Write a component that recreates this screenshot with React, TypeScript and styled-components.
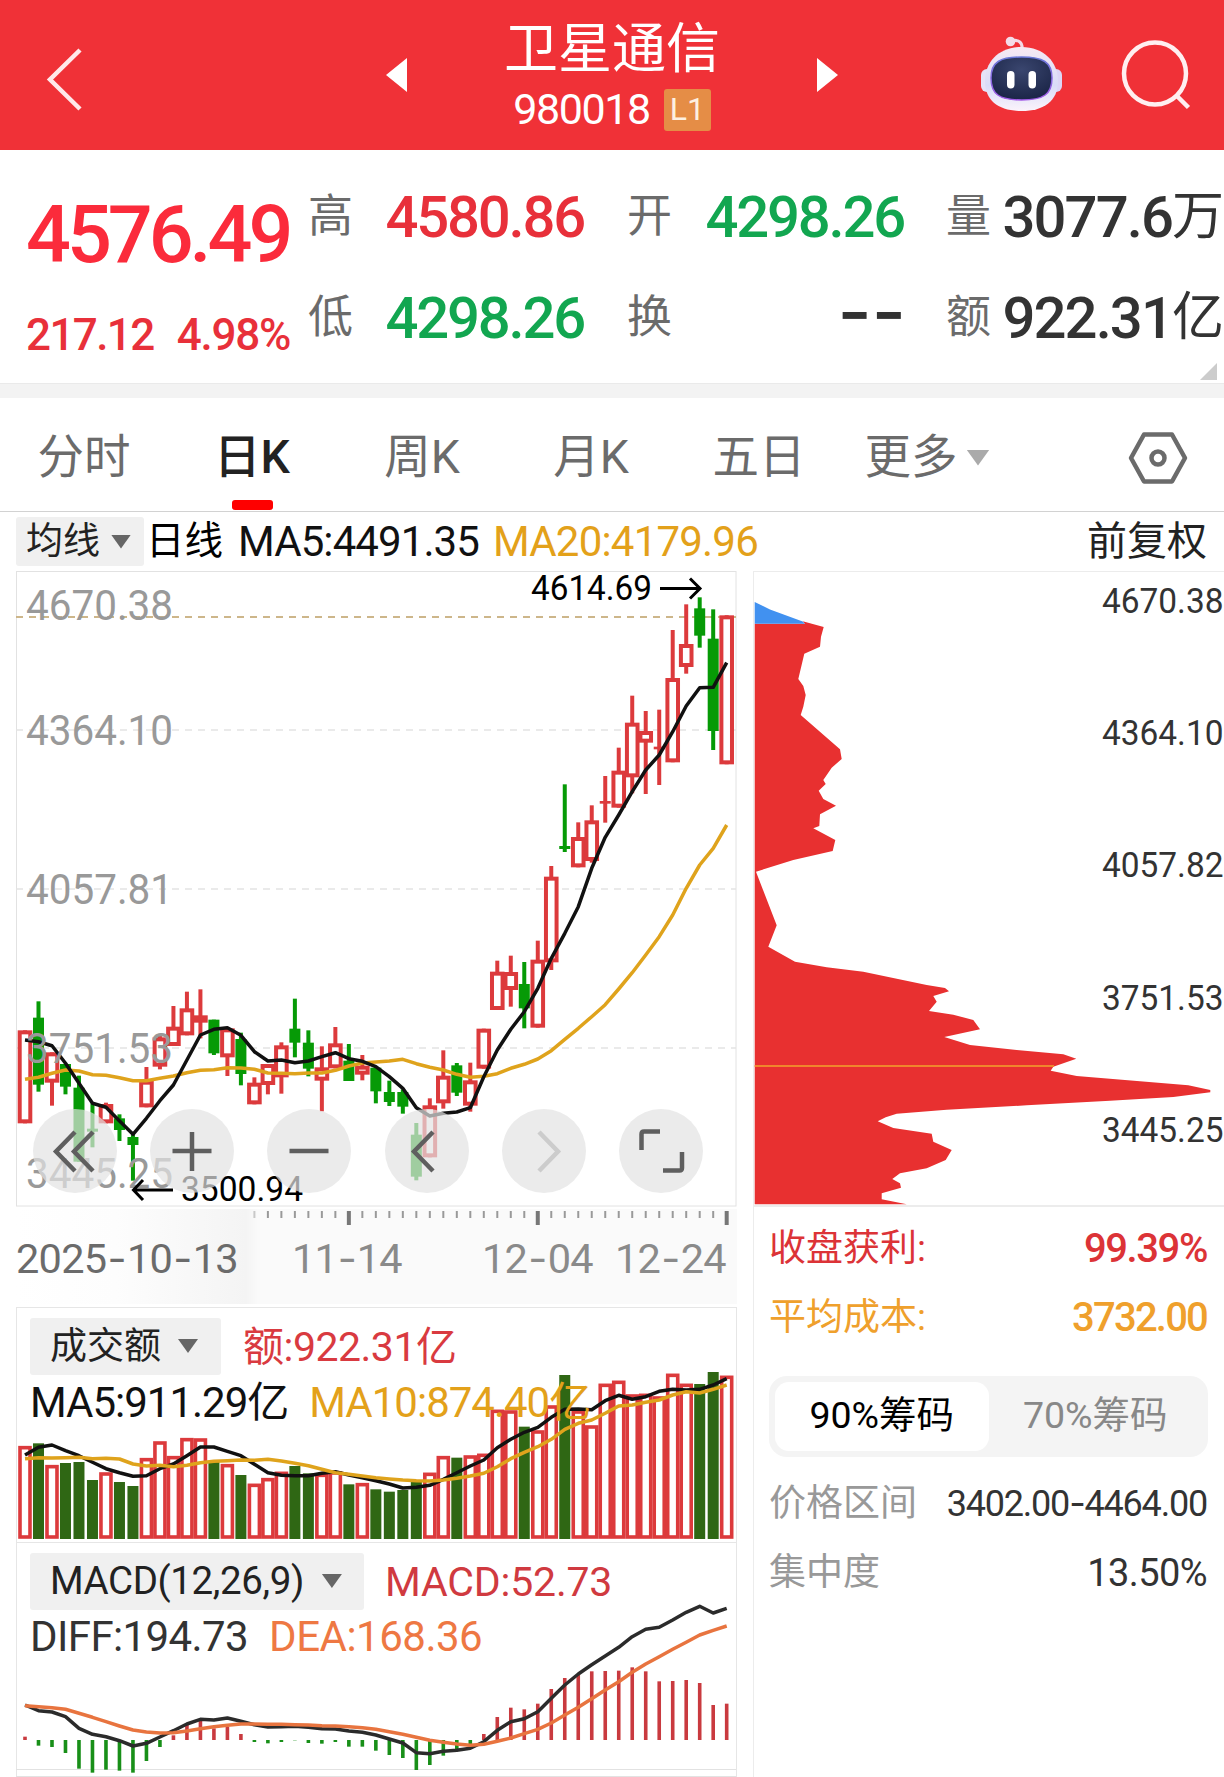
import React from 'react';
import styled, { createGlobalStyle } from 'styled-components';

const RED = '#e8303a';
const GREEN = '#12a650';
const INK = '#333333';
const GREY = '#6b6b6b';
const GOLD = '#e3a11a';

const Global = createGlobalStyle`
  * { box-sizing: border-box; }
  body {
    margin: 0;
    background: #fff;
    font-family: Roboto, "Noto Sans CJK SC", sans-serif;
    color: ${INK};
  }
  svg { display: block; }
`;

const Page = styled.main`
  width: 1224px;
  height: 1777px;
  overflow: hidden;
  display: flex;
  flex-direction: column;
  background: #fff;
`;

const Txt = styled.span<{ $s: number; $ls?: number; $c?: string; $w?: number; $ml?: number; $pt?: number }>`
  font-size: ${(p) => p.$s}px;
  letter-spacing: ${(p) => p.$ls ?? 0}px;
  color: ${(p) => p.$c ?? INK};
  font-weight: ${(p) => p.$w ?? 400};
  margin-left: ${(p) => p.$ml ?? 0}px;
  padding-top: ${(p) => p.$pt ?? 0}px;
  line-height: 1;
  white-space: nowrap;
`;

const Dash = styled.span`
  font-family: Inter, sans-serif;
`;

const Blank = styled.span`
  margin: 0 -2px 13px 0;
  font-family: Inter, sans-serif;
  font-size: 74px;
  font-weight: 500;
  line-height: 1;
  color: ${INK};
`;

/* Digits come from Roboto, hyphens from Inter, whose dash is as wide as a digit. */
const withDashes = (text: string) =>
  text.split(/(-)/).map((part, i) => (part === '-' ? <Dash key={i}>-</Dash> : part));

/* ---------- header ---------- */

const Header = styled.header`
  height: 150px;
  flex: none;
  display: grid;
  grid-template-columns: 386px 452px 386px;
  align-items: center;
  background: #f03137;
`;

const HeaderLeft = styled.div`
  padding: 9px 0 0 44px;
`;

const Switcher = styled.div`
  display: flex;
  align-items: center;
  justify-content: space-between;
`;

const Titles = styled.div`
  display: flex;
  flex-direction: column;
  align-items: center;
  padding-top: 4px;
`;

const CodeLine = styled.div`
  display: flex;
  align-items: center;
  gap: 14px;
  margin-top: 11px;
`;

const Badge = styled.span`
  width: 47px;
  height: 42px;
  border-radius: 3px;
  background: #e58d46;
  color: #fdf0e2;
  font-size: 32px;
  line-height: 41px;
  text-align: center;
`;

const HeaderRight = styled.div`
  display: flex;
  align-items: center;
  padding: 0 0 3px 141px;
  gap: 57px;
`;

const SearchButton = styled.div`
  padding-top: 3px;
`;

const Robot = () => (
  <svg width="84" height="80" viewBox="979 33 84 80">
    <defs>
      <linearGradient id="shell" x1="0" y1="0" x2="0" y2="1">
        <stop offset="0" stopColor="#f6e9f3" />
        <stop offset="0.6" stopColor="#d9dcf8" />
        <stop offset="1" stopColor="#fbf3fb" />
      </linearGradient>
      <linearGradient id="rim" x1="0" y1="0" x2="0" y2="1">
        <stop offset="0" stopColor="#6a78d8" />
        <stop offset="1" stopColor="#a35ae6" />
      </linearGradient>
      <radialGradient id="face" cx="0.5" cy="0.3" r="0.7">
        <stop offset="0" stopColor="#3a466f" />
        <stop offset="1" stopColor="#1b2547" />
      </radialGradient>
    </defs>
    <path d="M1011 40 C1018 38 1023 41 1022 49" fill="none" stroke="#f3d9e6" strokeWidth="3" />
    <circle cx="1010.5" cy="40.5" r="4.8" fill="#f4dbe8" />
    <rect x="981" y="68" width="14" height="23" rx="6" fill="#e6e3f8" />
    <rect x="1048" y="68" width="14" height="23" rx="6" fill="#dcd6f6" />
    <path d="M1021.500 46 C1044 46 1058 61 1058 80 C1058 100 1044 110 1021.500 110 C999 110 985 100 985 80 C985 61 999 46 1021.500 46 Z" fill="url(#shell)" />
    <path d="M1021.500 56 C1043 56 1052 61 1052 77 C1052 93 1044 99 1021.500 99 C999 99 991 93 991 77 C991 61 1000 56 1021.500 56 Z" fill="url(#face)" stroke="url(#rim)" strokeWidth="1.500" />
    <rect x="1007" y="70" width="7.500" height="17.500" rx="3.700" fill="#fff" />
    <rect x="1028.500" y="70" width="7.500" height="17.500" rx="3.700" fill="#fff" />
  </svg>
);

/* ---------- quote ---------- */

const Quote = styled.section`
  position: relative;
  height: 233px;
  flex: none;
  display: grid;
  grid-template-columns: 278px repeat(3, 278px);
  column-gap: 42px;
  margin-left: -14px;
  width: 1238px;
`;

const PriceBlock = styled.div`
  padding: 46px 0 0 40px;
  width: 320px;
`;

const Change = styled.div`
  display: flex;
  gap: 23px;
  margin-top: 38px;
`;

const QuoteCol = styled.div`
  display: flex;
  flex-direction: column;
  padding-top: 16px;
`;

const Cell = styled.div`
  height: 101px;
  display: flex;
  align-items: center;
  justify-content: space-between;
`;

const Amount = styled.span`
  display: flex;
  align-items: center;
`;

const Corner = styled.i`
  position: absolute;
  right: 7px;
  bottom: 3px;
  width: 17px;
  height: 17px;
  background: #ccc;
  clip-path: polygon(100% 0, 100% 100%, 0 100%);
`;

const Band = styled.div`
  height: 15px;
  flex: none;
  background: #f3f3f3;
  border-top: 1px solid #eaeaea;
`;

/* ---------- tabs ---------- */

const Tabs = styled.nav`
  height: 114px;
  flex: none;
  display: grid;
  grid-template-columns: 168px 168px 172px 166px 170px 166px 1fr;
  border-bottom: 1px solid #d2d2d2;
`;

const Tab = styled.div<{ $on?: boolean }>`
  position: relative;
  display: flex;
  align-items: center;
  justify-content: center;
  gap: 9px;
  padding-top: 6px;
  font-size: 46.5px;
  line-height: 1;
  color: ${(p) => (p.$on ? '#222' : GREY)};
  font-weight: ${(p) => (p.$on ? 500 : 400)};
  &::after {
    content: '';
    display: ${(p) => (p.$on ? 'block' : 'none')};
    position: absolute;
    bottom: 1px;
    left: 64px;
    width: 41px;
    height: 10px;
    border-radius: 3px;
    background: #fe0000;
  }
`;

const Settings = styled.div`
  display: flex;
  align-items: center;
  justify-content: flex-end;
  padding: 6px 36px 0 0;
`;

const Caret = styled.i<{ $w?: number; $h?: number; $c?: string }>`
  width: ${(p) => p.$w ?? 20}px;
  height: ${(p) => p.$h ?? 14}px;
  background: ${(p) => p.$c ?? '#666'};
  clip-path: polygon(0 0, 100% 0, 50% 100%);
`;

/* ---------- indicator line ---------- */

const MaLine = styled.div`
  height: 59px;
  flex: none;
  display: flex;
  align-items: center;
  padding: 0 17px 0 16px;
`;

const Picker = styled.button<{ $w: number; $h: number; $pl: number; $gap: number }>`
  width: ${(p) => p.$w}px;
  height: ${(p) => p.$h}px;
  padding: 0 0 0 ${(p) => p.$pl}px;
  display: flex;
  align-items: center;
  gap: ${(p) => p.$gap}px;
  border: 0;
  border-radius: 3px;
  background: #f0f0f0;
  font-family: inherit;
`;

const Right = styled.span`
  margin-left: auto;
  display: flex;
`;

/* ---------- body ---------- */

const Body = styled.div`
  flex: 1;
  min-height: 0;
  display: grid;
  grid-template-columns: 721px 471px;
  column-gap: 16px;
  padding-left: 16px;
`;

const Charts = styled.div`
  display: flex;
  flex-direction: column;
`;

const KPanel = styled.div`
  position: relative;
  height: 636px;
  flex: none;
`;

const Tools = styled.div`
  position: absolute;
  left: 17px;
  top: 538px;
  display: flex;
  gap: 33.2px;
`;

const Tool = styled.button<{ $off?: boolean }>`
  width: 84px;
  height: 84px;
  padding: 0;
  border: 0;
  border-radius: 50%;
  background: rgba(227, 227, 227, 0.7);
  stroke: ${(p) => (p.$off ? '#cccccc' : '#5f5f5f')};
  stroke-width: 4.5;
  fill: none;
`;

const Dates = styled.div`
  height: 100px;
  flex: none;
  padding-top: 2px;
`;

const DateStrip = styled.div`
  height: 95px;
  background: linear-gradient(90deg, #fff 0, #fdfdfd 100px, #f4f4f4 230px, #fafafa 242px, #fafafa 100%);
`;

const DateRow = styled.div`
  display: flex;
  align-items: center;
  height: 59px;
`;

const DateText = styled.span<{ $w: number; $ml?: number; $c?: string }>`
  width: ${(p) => p.$w}px;
  margin-left: ${(p) => p.$ml ?? 0}px;
  display: flex;
  justify-content: space-between;
  font-size: 41.5px;
  letter-spacing: -0.7px;
  line-height: 1;
  white-space: nowrap;
  color: ${(p) => p.$c ?? '#8a8a8a'};
`;

const SubPanel = styled.div<{ $h: number }>`
  position: relative;
  height: ${(p) => p.$h}px;
  flex: none;
  border: 1px solid #e6e6e6;
  border-bottom: 0;
`;

const Plot = styled.div`
  position: absolute;
  left: -1px;
  top: -1px;
`;

const Legend = styled.div`
  position: relative;
  padding: 9px 0 0 13px;
`;

const LegendRow = styled.div<{ $h: number }>`
  display: flex;
  align-items: center;
  height: ${(p) => p.$h}px;
`;

/* ---------- chips ---------- */

const Chips = styled.aside`
  border-left: 1px solid #ececec;
  border-top: 1px solid #ececec;
  display: flex;
  flex-direction: column;
`;

const ChipPlot = styled.div`
  height: 635px;
  flex: none;
  border-bottom: 2px solid #ececec;
`;

const Stats = styled.div`
  padding: 7px 17px 0 15px;
  display: flex;
  flex-direction: column;
`;

const StatRow = styled.div`
  height: 69px;
  display: flex;
  align-items: center;
  justify-content: space-between;
`;

const Segment = styled.div`
  height: 81px;
  margin: 24px -1px 12px 0;
  padding: 6px;
  display: grid;
  grid-template-columns: 1fr 1fr;
  border-radius: 18px;
  background: #f4f4f4;
`;

const SegmentItem = styled.div<{ $on?: boolean }>`
  display: flex;
  align-items: center;
  justify-content: center;
  padding-bottom: 2px;
  border-radius: 14px;
  font-size: 37.5px;
  line-height: 1;
  color: ${(p) => (p.$on ? '#000' : '#888')};
  background: ${(p) => (p.$on ? '#fff' : 'transparent')};
`;

/* ---------- data ---------- */

const STEP = 13.494;
const X = (i: number) => 25 + STEP * i;

// [up, body top, body bottom, wick top, wick bottom], in thirds of a pixel
type Candle = [number, number, number, number, number];
const candles: Candle[] = [
  [1, 211, 490, 211, 490], [0, 173, 374, 124, 395], [1, 277, 368, 277, 437], [0, 312, 380, 312, 403],
  [0, 383, 605, 347, 605], [0, 506, 515, 430, 562], [1, 432, 490, 428, 490], [0, 475, 510, 463, 543],
  [0, 531, 555, 525, 662], [1, 362, 442, 321, 442], [1, 232, 320, 226, 328], [1, 200, 258, 138, 258],
  [1, 145, 226, 95, 226], [1, 166, 188, 88, 235], [0, 179, 280, 179, 285], [1, 205, 292, 205, 348],
  [0, 237, 342, 218, 376], [1, 368, 433, 352, 433], [1, 312, 375, 312, 403], [1, 256, 352, 247, 401],
  [0, 206, 248, 116, 292], [0, 248, 326, 211, 349], [1, 322, 362, 259, 454], [1, 250, 325, 201, 325],
  [0, 302, 363, 252, 363], [1, 317, 344, 285, 361], [0, 323, 394, 323, 430], [0, 396, 426, 362, 438],
  [0, 396, 440, 388, 461], [0, 524, 650, 489, 661], [1, 436, 592, 415, 592], [1, 347, 430, 271, 446],
  [0, 316, 398, 309, 408], [1, 361, 437, 308, 455], [1, 206, 326, 206, 326], [1, 35, 150, 2, 150],
  [1, 36, 90, -13, 140], [0, 72, 145, 6, 205], [1, -1, 203, -58, 203], [1, -250, 7, -282, 30],
  [0, -342, -333, -527, -324], [1, -369, -278, -413, -278], [1, -419, -297, -464, -292], [1, -477, -469, -552, -412],
  [1, -568, -457, -637, -457], [1, -712, -548, -793, -500], [1, -687, -652, -747, -498], [1, -640, -632, -751, -525],
  [1, -846, -593, -990, -593], [1, -948, -879, -1067, -859], [0, -1055, -973, -1088, -937], [0, -964, -687, -1052, -630],
  [1, -1034, -587, -1034, -587],
];

const ma5 = [240, 245, 257, 310, 370, 430, 442, 483, 523, 475, 422, 375, 300, 225, 208, 203, 226, 275, 303, 300, 308, 303, 290, 278, 296, 304, 320, 350, 385, 443, 468, 460, 456, 443, 350, 270, 208, 155, 85, -5, -80, -160, -275, -368, -435, -505, -570, -615, -685, -762, -817, -818, -892];
const ma20 = [358, 352, 340, 330, 333, 344, 346, 353, 362, 362, 355, 348, 338, 331, 329, 323, 324, 328, 339, 340, 341, 339, 339, 331, 318, 309, 306, 303, 298, 311, 322, 330, 343, 352, 349, 341, 325, 313, 297, 272, 238, 205, 170, 134, 87, 38, -15, -70, -135, -215, -285, -335, -405];

const volume = [767, 760, 824, 819, 816, 870, 846, 876, 888, 803, 753, 797, 743, 744, 815, 821, 855, 880, 863, 844, 828, 850, 850, 843, 883, 878, 898, 905, 900, 875, 847, 797, 803, 795, 790, 658, 660, 710, 720, 645, 555, 660, 705, 580, 571, 612, 610, 618, 550, 580, 582, 546, 556];
const vma5 = [795, 772, 765, 782, 797, 817, 836, 848, 859, 857, 836, 822, 797, 771, 771, 784, 797, 823, 848, 856, 857, 857, 850, 845, 855, 863, 872, 882, 894, 892, 886, 868, 848, 828, 810, 773, 748, 727, 712, 682, 658, 657, 659, 632, 616, 628, 620, 604, 598, 600, 598, 585, 566];
const vma10 = [806, 803, 804, 803, 802, 806, 805, 807, 822, 828, 826, 830, 826, 818, 814, 812, 810, 811, 808, 813, 820, 827, 838, 848, 853, 858, 863, 867, 870, 872, 873, 870, 865, 858, 850, 830, 806, 787, 770, 748, 718, 700, 690, 670, 648, 645, 637, 630, 615, 605, 609, 598, 585];

const macd = [590, 617, 621, 639, 686, 698, 689, 692, 698, 663, 621, 586, 555, 542, 565, 560, 582, 606, 610, 606, 601, 609, 611, 606, 620, 620, 632, 645, 654, 690, 675, 647, 630, 612, 582, 531, 503, 508, 491, 447, 414, 405, 394, 393, 392, 382, 394, 424, 423, 420, 429, 495, 491];
const diff = [495, 512, 516, 530, 565, 583, 590, 602, 618, 610, 591, 572, 552, 538, 540, 534, 544, 554, 561, 560, 559, 562, 566, 567, 573, 577, 585, 597, 609, 638, 641, 634, 631, 625, 605, 571, 545, 536, 515, 475, 435, 402, 374, 348, 322, 290, 268, 262, 240, 217, 199, 219, 205];
const dea = [497, 500, 503, 508, 520, 532, 545, 558, 570, 576, 579, 578, 573, 566, 560, 556, 552, 552, 553, 553, 554, 555, 557, 558, 560, 563, 568, 575, 583, 592, 601, 607, 612, 616, 613, 604, 594, 581, 568, 549, 525, 502, 476, 450, 425, 397, 372, 350, 328, 307, 285, 271, 258];

const chipEdge: [number, number][] = [
  [44, 701], [195, 701], [188, 694], [251, 711], [243, 740], [240, 770], [193, 791], [175, 867], [190, 888], [197, 915], [190, 950], [182, 975],
  [300, 1078], [305, 1107], [275, 1133], [250, 1170], [257, 1182], [236, 1202], [250, 1227], [288, 1247], [240, 1273], [238, 1308],
  [220, 1315], [286, 1350], [278, 1383], [160, 1410], [48, 1445], [110, 1606], [85, 1670], [165, 1715], [260, 1732], [370, 1745],
  [560, 1785], [615, 1794], [627, 1804], [580, 1818], [590, 1835], [567, 1863], [640, 1874], [700, 1890], [720, 1918], [613, 1941],
  [690, 1965], [830, 1980], [970, 1993], [1009, 2006], [940, 2030], [932, 2042], [1010, 2058], [1200, 2074], [1345, 2086], [1411, 2100],
  [1411, 2107], [1300, 2121], [1110, 2132], [860, 2146], [620, 2159], [470, 2171], [437, 2182], [413, 2194], [460, 2214], [575, 2231],
  [580, 2255], [635, 2280], [617, 2310], [560, 2335], [480, 2350], [457, 2367], [480, 2380], [483, 2393], [425, 2410], [425, 2428],
  [500, 2443], [44, 2443],
];

const line = (values: number[], top: number) =>
  values.map((v, i) => `${X(i).toFixed(1)},${(top + v / 3).toFixed(1)}`).join(' ');

const Line = ({ values, top, color, w = 3.5 }: { values: number[]; top: number; color: string; w?: number }) => (
  <polyline points={line(values, top)} fill="none" stroke={color} strokeWidth={w} strokeLinejoin="round" />
);

const AxisText = styled.text`
  font-family: Roboto, sans-serif;
  font-size: 42px;
  fill: #999;
`;

const MarkText = styled.text`
  font-family: Roboto, sans-serif;
  font-size: 35px;
  fill: #000;
`;

const KChart = () => (
  <svg width="721" height="636" viewBox="16 571 721 636">
    <rect x="16.500" y="571.500" width="719.500" height="634.500" fill="none" stroke="#e2e2e2" />
    {[730, 889, 1048].map((y) => (
      <line key={y} x1="16" x2="736" y1={y} y2={y} stroke="#e4e4e4" strokeWidth="1.500" strokeDasharray="7 6" />
    ))}
    <line x1="16" x2="736" y1="617" y2="617" stroke="#cdb68a" strokeWidth="2" strokeDasharray="7 6" />
    {candles.map(([up, t, b, h, l], i) => {
      const y = (v: number) => 960 + v / 3;
      const x = X(i);
      const small = b - t < 12;
      if (up && !small) {
        return (
          <g key={i} stroke="#dc3a3c" strokeWidth="4" fill="#fff">
            <path d={`M${x} ${y(h)}V${y(l)}`} />
            <rect x={x - 5.3} y={y(t) + 2} width="10.600" height={Math.max(y(b) - y(t) - 4, 1)} />
          </g>
        );
      }
      const c = up ? '#dc3a3c' : '#069a06';
      return (
        <g key={i} fill={c}>
          <rect x={x - 2} y={y(h)} width="4" height={y(l) - y(h)} />
          <rect x={x - 5.5} y={y(t)} width="11" height={y(b) - y(t)} />
        </g>
      );
    })}
    <Line values={ma20} top={960} color="#dfa31c" />
    <Line values={ma5} top={960} color="#111" />
    {([['4670.38', 620], ['4364.10', 745], ['4057.81', 904], ['3751.53', 1063], ['3445.25', 1188]] as [string, number][]).map(([t, y]) => (
      <AxisText key={t} x="26" y={y} textLength="147" lengthAdjust="spacingAndGlyphs">{t}</AxisText>
    ))}
    <MarkText x="531" y="600" textLength="121" lengthAdjust="spacingAndGlyphs">4614.69</MarkText>
    <MarkText x="181" y="1201" textLength="122" lengthAdjust="spacingAndGlyphs">3500.94</MarkText>
    <g fill="none" stroke="#000" strokeWidth="3">
      <path d="M660 588.500H700M690 578.500L700 588.500L690 598.500" />
      <path d="M173 1190H134M143 1180L133.500 1190L143 1200" />
    </g>
  </svg>
);

const tools: { d: string; off?: boolean }[] = [
  { d: 'M42 23L23 42.500L42 62M60 23L41 42.500L60 62' },
  { d: 'M42 23V62M22.500 42H61.500' },
  { d: 'M22.500 42H61.500' },
  { d: 'M48 23L29 42.500L48 62' },
  { d: 'M37 23L56 42.500L37 62', off: true },
  { d: 'M41 22.500H25Q22.500 22.500 22.500 25V41M63 43V59Q63 61.500 60.500 61.500H44' },
];

const Ticks = () => (
  <svg width="721" height="20" viewBox="16 1208 721 20">
    {candles.slice(17).map((_, k) => {
      const i = k + 17;
      const major = i === 24 || i === 38 || i === 52;
      return (
        <line key={i} x1={X(i)} x2={X(i)} y1="1210" y2={major ? 1224 : 1217} stroke={major ? '#777' : '#999'} strokeWidth={major ? 4 : 2} opacity={i === 17 ? 0.5 : 1} />
      );
    })}
  </svg>
);

const Volume = () => (
  <svg width="721" height="235" viewBox="16 1307 721 235">
    {volume.map((v, i) => {
      const y = 1190 + v / 3;
      return candles[i][0] ? (
        <rect key={i} x={X(i) - 5} y={y + 2} width="10" height={1538 - y - 3} fill="#fff" stroke="#dc3a3c" strokeWidth="3.600" />
      ) : (
        <rect key={i} x={X(i) - 5.5} y={y} width="11" height={1539 - y} fill="#2f6714" />
      );
    })}
    <Line values={vma5} top={1190} color="#111" />
    <Line values={vma10} top={1190} color="#dfa31c" />
  </svg>
);

const Macd = () => (
  <svg width="721" height="235" viewBox="16 1542 721 235">
    <path d="M16 1769.500H736M16 1776.500H736" stroke="#e2e2e2" />
    {macd.map((v, i) => {
      const y = 1540 + v / 3;
      const up = v < 600;
      return <rect key={i} x={X(i) - 1.8} y={Math.min(y, 1740)} width="3.600" height={Math.abs(y - 1740)} fill={up ? '#c93a3f' : '#188f18'} />;
    })}
    <Line values={diff} top={1540} color="#2b2b2b" />
    <Line values={dea} top={1540} color="#e8743f" />
  </svg>
);

const ChipText = styled.text`
  font-family: Roboto, sans-serif;
  font-size: 35px;
  fill: #333;
`;

const ChipChart = () => (
  <svg width="470" height="633" viewBox="754 572 470 633">
    <polygon points={chipEdge.map(([x, y]) => `${(740 + x / 3).toFixed(1)},${(390 + y / 3).toFixed(1)}`).join(' ')} fill="#e83030" />
    <polygon points="754.700,602 770,609.500 802.700,621.500 805,623.700 754.700,623.700" fill="#4191f0" />
    <line x1="754.700" x2="1054" y1="1066" y2="1066" stroke="#f0862c" strokeWidth="2" />
    {['4670.38', '4364.10', '4057.82', '3751.53', '3445.25'].map((t, i) => (
      <ChipText key={t} x="1102" y={612.7 + i * 132.3} textLength="121.500" lengthAdjust="spacingAndGlyphs">{t}</ChipText>
    ))}
  </svg>
);

export default function App() {
  return (
    <Page>
      <Global />
      <Header>
        <HeaderLeft>
          <svg width="40" height="64" viewBox="44 47 40 64">
            <path d="M80 49L50 78.500L80 108" fill="none" stroke="#ffe9ea" strokeWidth="4.500" />
          </svg>
        </HeaderLeft>
        <Switcher>
          <svg width="21" height="34" viewBox="0 0 21 34"><path d="M21 0V34L0 17Z" fill="#fff" /></svg>
          <Titles>
            <Txt $s={54} $c="#fff">卫星通信</Txt>
            <CodeLine>
              <Txt $s={43} $ls={-1.4} $c="#fff">980018</Txt>
              <Badge>L1</Badge>
            </CodeLine>
          </Titles>
          <svg width="21" height="34" viewBox="0 0 21 34"><path d="M0 0V34L21 17Z" fill="#fff" /></svg>
        </Switcher>
        <HeaderRight>
          <Robot />
          <SearchButton>
            <svg width="72" height="72" viewBox="1120 39 72 72">
              <g fill="none" stroke="#ffeff0" strokeWidth="4.500">
                <circle cx="1155" cy="73.500" r="31" />
                <path d="M1176 95L1188.500 107.500" />
              </g>
            </svg>
          </SearchButton>
        </HeaderRight>
      </Header>

      <Quote>
        <PriceBlock>
          <Txt as="div" $s={79} $ls={-4} $w={500} $c="#fb2b3b">4576.49</Txt>
          <Change>
            <Txt $s={44} $ls={-1.6} $w={500} $c={RED}>217.12</Txt>
            <Txt $s={44} $ls={-1.2} $w={500} $c={RED}>4.98%</Txt>
          </Change>
        </PriceBlock>
        <QuoteCol>
          <Cell><Txt $s={45} $c={GREY} $ml={2}>高</Txt><Txt $s={58} $ls={-2.2} $w={500} $c={RED}>4580.86</Txt></Cell>
          <Cell><Txt $s={45} $c={GREY} $ml={2}>低</Txt><Txt $s={58} $ls={-2.2} $w={500} $c={GREEN}>4298.26</Txt></Cell>
        </QuoteCol>
        <QuoteCol>
          <Cell><Txt $s={45} $c={GREY} $ml={1}>开</Txt><Txt $s={58} $ls={-2.2} $w={500} $c={GREEN}>4298.26</Txt></Cell>
          <Cell><Txt $s={45} $c={GREY} $ml={1}>换</Txt><Blank>--</Blank></Cell>
        </QuoteCol>
        <QuoteCol>
          <Cell><Txt $s={45} $c={GREY}>量</Txt><Amount><Txt $s={58} $ls={-1.9} $w={500}>3077.6</Txt><Txt $s={52}>万</Txt></Amount></Cell>
          <Cell><Txt $s={45} $c={GREY}>额</Txt><Amount><Txt $s={58} $ls={-1.9} $w={500}>922.31</Txt><Txt $s={52}>亿</Txt></Amount></Cell>
        </QuoteCol>
        <Corner />
      </Quote>
      <Band />

      <Tabs>
        <Tab>分时</Tab>
        <Tab $on>日K</Tab>
        <Tab>周K</Tab>
        <Tab>月K</Tab>
        <Tab>五日</Tab>
        <Tab>更多<Caret $w={23} $h={16} $c="#aaa" /></Tab>
        <Settings>
          <svg width="60" height="54" viewBox="1128 430.500 60 54">
            <g fill="none" stroke={GREY} strokeWidth="4.500">
              <path d="M1144 434H1172L1185 457.500L1172 481H1144L1131 457.500Z" strokeLinejoin="round" />
              <circle cx="1158" cy="457.500" r="6.500" />
            </g>
          </svg>
        </Settings>
      </Tabs>

      <MaLine>
        <Picker $w={128} $h={49} $pl={10} $gap={11}><Txt $s={37} $c="#222">均线</Txt><Caret /></Picker>
        <Txt $s={38.5} $c="#000" $ml={2}>日线</Txt>
        <Txt $s={42} $ls={-0.9} $c="#111" $ml={15}>MA5:4491.35</Txt>
        <Txt $s={42} $ls={-0.8} $c={GOLD} $ml={14}>MA20:4179.96</Txt>
        <Right><Txt $s={40} $c="#222">前复权</Txt></Right>
      </MaLine>

      <Body>
        <Charts>
          <KPanel>
            <KChart />
            <Tools>
              {tools.map((t) => (
                <Tool key={t.d} $off={t.off}>
                  <svg width="84" height="84" viewBox="0 0 84 84"><path d={t.d} /></svg>
                </Tool>
              ))}
            </Tools>
          </KPanel>
          <Dates>
            <DateStrip>
              <Ticks />
              <DateRow>
                <DateText $w={222} $c={GREY}>{withDashes('2025-10-13')}</DateText>
                <DateText $w={110} $ml={54}>{withDashes('11-14')}</DateText>
                <DateText $w={111} $ml={80}>{withDashes('12-04')}</DateText>
                <DateText $w={111} $ml={22}>{withDashes('12-24')}</DateText>
              </DateRow>
            </DateStrip>
          </Dates>
          <SubPanel $h={235}>
            <Plot><Volume /></Plot>
            <Legend>
              <LegendRow $h={58}>
                <Picker $w={191} $h={57} $pl={20} $gap={17}><Txt $s={37} $c="#222">成交额</Txt><Caret /></Picker>
                <Txt $s={41} $ls={-0.5} $c="#d93a40" $ml={22} $pt={3}>额:922.31亿</Txt>
              </LegendRow>
              <LegendRow $h={54}>
                <Txt $s={42} $ls={-1} $c="#111" $pt={2}>MA5:911.29亿</Txt>
                <Txt $s={42} $ls={-1} $c={GOLD} $ml={21} $pt={2}>MA10:874.40亿</Txt>
              </LegendRow>
            </Legend>
          </SubPanel>
          <SubPanel $h={235}>
            <Plot><Macd /></Plot>
            <Legend>
              <LegendRow $h={58}>
                <Picker $w={334} $h={57} $pl={20} $gap={18}><Txt $s={38.5} $ls={-0.4} $c="#222">MACD(12,26,9)</Txt><Caret /></Picker>
                <Txt $s={41} $ls={-0.2} $c="#d03a40" $ml={21} $pt={3}>MACD:52.73</Txt>
              </LegendRow>
              <LegendRow $h={54}>
                <Txt $s={42} $ls={-0.6}>DIFF:194.73</Txt>
                <Txt $s={42} $ls={-0.5} $c="#ee7843" $ml={21}>DEA:168.36</Txt>
              </LegendRow>
            </Legend>
          </SubPanel>
        </Charts>

        <Chips>
          <ChipPlot><ChipChart /></ChipPlot>
          <Stats>
            <StatRow><Txt $s={37} $c="#dc3337">收盘获利:</Txt><Txt $s={40} $ls={-1.4} $w={500} $c="#dc3337">99.39%</Txt></StatRow>
            <StatRow><Txt $s={37} $c="#efa02c">平均成本:</Txt><Txt $s={40} $ls={-1.8} $w={500} $c="#efa02c">3732.00</Txt></StatRow>
            <Segment>
              <SegmentItem $on>90%筹码</SegmentItem>
              <SegmentItem>70%筹码</SegmentItem>
            </Segment>
            <StatRow><Txt $s={37} $c="#999">价格区间</Txt><Txt $s={36} $ls={-1.2}>{withDashes('3402.00-4464.00')}</Txt></StatRow>
            <StatRow><Txt $s={37} $c="#999">集中度</Txt><Txt $s={38} $ls={-0.6}>13.50%</Txt></StatRow>
          </Stats>
        </Chips>
      </Body>
    </Page>
  );
}
